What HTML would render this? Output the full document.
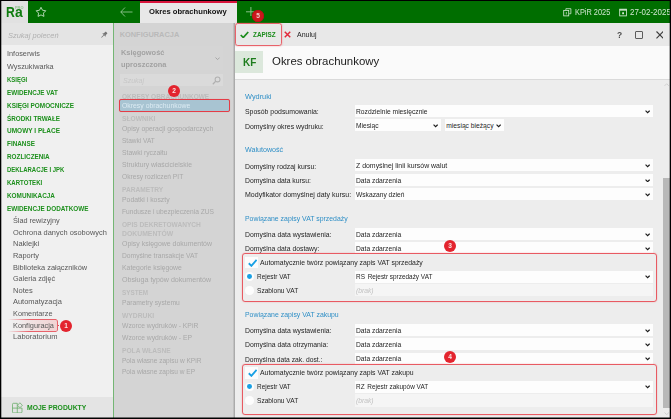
<!DOCTYPE html>
<html lang="pl">
<head>
<meta charset="utf-8">
<title>Okres obrachunkowy</title>
<style>
*{box-sizing:border-box;margin:0;padding:0}
html,body{width:671px;height:419px;overflow:hidden;background:#000}
body{font-family:"Liberation Sans",sans-serif;font-size:7.3px;color:#222;position:relative}
.abs{position:absolute}
.t{position:absolute;white-space:nowrap;line-height:10px;height:10px;transform-origin:0 50%;transform:scaleX(1.002)}
#app{position:absolute;left:1px;top:1px;width:669px;height:417px;background:#ededed}
.bk{position:absolute;background:#000;z-index:9}
#logo{left:0;top:0;width:27px;height:22px;background:#e1e1e1}
#topbar{left:27px;top:0;width:642px;height:22px;background:#006e00}
#tab{left:138.8px;top:0;width:97px;height:22px;background:#e8e8e8;border-top:2.1px solid #d8143c}
#left{left:0;top:22px;width:112.4px;height:395px;background:#f0f0f0}
#lsearch{left:0;top:22px;width:112.4px;height:22px;background:#e4e4e4}
#lfoot{left:0;top:395.8px;width:112.4px;height:22px;background:#e4e4e4}
.m1{color:#585858}
.mg{color:#1d901d;font-weight:bold;transform:scaleX(.875)}
.m2{color:#585858}
#mid{left:112.4px;top:22px;width:119.6px;height:395px;background:#d4d4d4;border-left:1px solid #74b674}
#midsh{left:231.9px;top:22px;width:2.4px;height:395px;background:linear-gradient(90deg,#cbcbcb,#a0a0a0)}
.ch{color:#bcbcbc;font-weight:bold;transform:scaleX(.9)}
.ci{color:#a8a8a8;font-size:6.7px}
#tool{left:234.3px;top:22px;width:434.5px;height:22.5px;background:#e8e8e8}
#head{left:234.3px;top:44.5px;width:434.5px;height:34.2px;background:#fafafa;border-bottom:1px solid #dadada}
.sec{color:#2f8fc6;font-size:7px}
.lab{color:#1e1e1e;font-size:6.9px}
.sel{position:absolute;height:11.6px;background:#fdfdfd}
.sel span{position:absolute;left:1.3px;top:.7px;line-height:11.9px;font-size:6.7px;color:#1e1e1e;white-space:nowrap;transform:scaleX(1.002);transform-origin:0 50%}
.sel svg{position:absolute;right:2.8px;top:4.7px;width:5.2px;height:3.8px}
.rbox{position:absolute;border:1.4px solid #e85a62;border-radius:3px;box-shadow:0 0 1.2px rgba(235,80,85,.6)}
.badge{position:absolute;transform:scaleX(1.002);width:12px;height:12px;border-radius:50%;background:#e3242e;color:#fae4e4;font-size:6.6px;font-weight:bold;text-align:center;line-height:12.2px}
</style>
</head>
<body>
<div id="app">
<div id="logo" class="abs"></div>
<div id="topbar" class="abs"></div>
<div id="tab" class="abs"></div>
<div class="t " style="left:5.3px;top:6.7px;font-size:13.8px;font-weight:bold;color:#0e7c0e;transform:scaleX(.88)">R</div>
<div class="t " style="left:13.6px;top:6.7px;font-size:13.8px;font-weight:bold;color:#0e7c0e;transform:scaleX(1.01)">a</div>
<div class="t " style="left:14.4px;top:1.9px;font-size:3.9px;color:#8fc48f;font-weight:bold">PRO</div>
<svg class="abs" style="left:34.1px;top:4.9px;width:12px;height:12px" viewBox="0 0 22 22"><path d="M11.00 2.40L13.76 7.80L19.75 8.76L15.47 13.05L16.41 19.04L11.00 16.30L5.59 19.04L6.53 13.05L2.25 8.76L8.24 7.80z" fill="none" stroke="#d8ebd8" stroke-width="1.5" stroke-linejoin="round"/></svg>
<svg class="abs" style="left:119.4px;top:5.6px;width:13px;height:10px" viewBox="0 0 26 20"><path d="M10 1L1.500 10l8.500 9M1.500 10H25" fill="none" stroke="#a9d3a9" stroke-width="1.500"/></svg>
<div class="t " style="left:148.4px;top:6.4px;font-size:7.63px;font-weight:bold;color:#111">Okres obrachunkowy</div>
<svg class="abs" style="left:245.4px;top:5.8px;width:9.600px;height:9.600px" viewBox="0 0 20 20"><path d="M10.200 0v20M0 10h20" fill="none" stroke="#96c896" stroke-width="1.900"/></svg>
<div class="t " style="left:573.6px;top:6.8px;font-size:8.2px;color:#d0e6d0;transform:scaleX(.9)">KPiR 2025</div>
<div class="t " style="left:628.6px;top:6.8px;font-size:8.2px;color:#d0e6d0;transform:scaleX(.975)">27-02-2025</div>
<svg class="abs" style="left:562.0px;top:7.4px;width:8.600px;height:8.600px" viewBox="0 0 18 18"><path d="M6 4V1.500h10.500V12H13" fill="none" stroke="#d5ead5" stroke-width="1.7"/><rect x="1.500" y="5" width="10.500" height="11.500" fill="none" stroke="#d5ead5" stroke-width="1.700"/><path d="M7 8.500v5" stroke="#d5ead5" stroke-width="1.5"/></svg>
<svg class="abs" style="left:617.9px;top:7.4px;width:8.200px;height:8.600px" viewBox="0 0 18 18" preserveAspectRatio="none"><rect x="1.500" y="2.500" width="15" height="14" fill="none" stroke="#d5ead5" stroke-width="1.800"/><path d="M1.500 4h15" stroke="#d5ead5" stroke-width="3"/><rect x="7" y="9" width="4" height="4" fill="#d5ead5"/></svg>
<div id="left" class="abs"></div><div id="lsearch" class="abs"></div><div id="lfoot" class="abs"></div>
<div class="t " style="left:7.1px;top:29.7px;font-style:italic;color:#b0b0b0;font-size:7.46px">Szukaj poleceń</div>
<svg class="abs" style="left:98.7px;top:30.0px;width:8px;height:8px" viewBox="0 0 14 14"><g transform="rotate(45 7 7)" fill="#757575"><rect x="4.700" y=".6" width="4.600" height="5.200" rx=".9"/><rect x="3.300" y="5.600" width="7.400" height="1.500" rx=".3"/><rect x="6.400" y="7" width="1.200" height="6.400"/></g></svg>
<div class="t m1" style="left:6.1px;top:48.0px;">Infoserwis</div>
<div class="t m1" style="left:6.1px;top:60.9px;">Wyszukiwarka</div>
<div class="t mg" style="left:6.1px;top:73.8px;transform:scaleX(0.817)">KSIĘGI</div>
<div class="t mg" style="left:6.1px;top:86.7px;transform:scaleX(0.864)">EWIDENCJE VAT</div>
<div class="t mg" style="left:6.1px;top:99.6px;transform:scaleX(0.879)">KSIĘGI POMOCNICZE</div>
<div class="t mg" style="left:6.1px;top:112.5px;transform:scaleX(0.868)">ŚRODKI TRWAŁE</div>
<div class="t mg" style="left:6.1px;top:125.4px;transform:scaleX(0.891)">UMOWY I PŁACE</div>
<div class="t mg" style="left:6.1px;top:138.3px;transform:scaleX(0.871)">FINANSE</div>
<div class="t mg" style="left:6.1px;top:151.2px;transform:scaleX(0.870)">ROZLICZENIA</div>
<div class="t mg" style="left:6.1px;top:164.1px;transform:scaleX(0.817)">DEKLARACJE I JPK</div>
<div class="t mg" style="left:6.1px;top:177.0px;transform:scaleX(0.829)">KARTOTEKI</div>
<div class="t mg" style="left:6.1px;top:189.9px;transform:scaleX(0.877)">KOMUNIKACJA</div>
<div class="t mg" style="left:6.1px;top:202.8px;transform:scaleX(0.872)">EWIDENCJE DODATKOWE</div>
<div class="t m2" style="left:12.1px;top:215.1px;transform:scaleX(0.999)">Ślad rewizyjny</div>
<div class="t m2" style="left:12.1px;top:226.7px;transform:scaleX(1.019)">Ochrona danych osobowych</div>
<div class="t m2" style="left:12.1px;top:238.3px;transform:scaleX(1.026)">Naklejki</div>
<div class="t m2" style="left:12.1px;top:249.9px;transform:scaleX(1.017)">Raporty</div>
<div class="t m2" style="left:12.1px;top:261.5px;transform:scaleX(1.016)">Biblioteka załączników</div>
<div class="t m2" style="left:12.1px;top:273.1px;transform:scaleX(0.988)">Galeria zdjęć</div>
<div class="t m2" style="left:12.1px;top:284.7px;transform:scaleX(1.033)">Notes</div>
<div class="t m2" style="left:12.1px;top:296.3px;transform:scaleX(1.022)">Automatyzacja</div>
<div class="t m2" style="left:12.1px;top:307.9px;transform:scaleX(1.004)">Komentarze</div>
<div class="abs" style="left:7.0px;top:318.0px;width:50.2px;height:12.9px;border:1.3px solid #e8626a;border-left:none;border-radius:0 2.5px 2.5px 0;background:linear-gradient(90deg,rgba(240,240,240,0),rgba(242,200,200,.75));-webkit-mask-image:linear-gradient(90deg,transparent,#000 42%);mask-image:linear-gradient(90deg,transparent,#000 42%)"></div><div class="abs" style="left:57.0px;top:323.9px;width:1.4px;height:1.2px;background:#e2464e"></div>
<div class="t m2" style="left:12.1px;top:319.5px;transform:scaleX(1.010)">Konfiguracja</div>
<div class="t m2" style="left:12.1px;top:331.1px;transform:scaleX(1.033)">Laboratorium</div>
<div class="badge" style="left:58.5px;top:318.8px">1</div>
<svg class="abs" style="left:11.0px;top:400.8px;width:11.400px;height:11.400px" viewBox="0 0 22.800 22.800"><g fill="none" stroke="#62aa62" stroke-width="1.500"><path d="M10.600 2.600H3a2 2 0 0 0-2 2V19.800a2 2 0 0 0 2 2H18a2 2 0 0 0 2-2V12"/><path d="M10.600 2.600V21.800M1 12.200H20"/><path d="M15.900 1.600l4.900 4.900-4.900 4.900L11 6.500z" fill="#e4e4e4"/></g></svg>
<div class="t mg" style="left:26.1px;top:401.7px;font-size:7.4px;transform:scaleX(.92)">MOJE PRODUKTY</div>
<div id="mid" class="abs"></div><div id="midsh" class="abs"></div>
<div class="t ch" style="left:118.7px;top:29.3px;font-size:7.4px;color:#b9b9b9;transform:scaleX(1)">KONFIGURACJA</div>
<div class="abs" style="left:118.0px;top:44.8px;width:104px;height:24.2px;background:#d5d5d5"></div>
<div class="t " style="left:120.0px;top:47.4px;font-size:8px;font-weight:bold;color:#a2a2a2;transform:scaleX(.93)">Księgowość</div>
<div class="t " style="left:120.0px;top:58.7px;font-size:8px;font-weight:bold;color:#a2a2a2;transform:scaleX(.93)">uproszczona</div>
<svg class="abs" style="left:213.9px;top:55.9px;width:5.2px;height:3.7px" viewBox="0 0 10 7"><path d="M1 1l4 4 4-4" fill="none" stroke="#a4a4a4" stroke-width="1.900"/></svg>
<div class="abs" style="left:118.5px;top:72.7px;width:103.5px;height:12px;background:#dadada"></div>
<div class="t " style="left:122.0px;top:74.5px;font-style:italic;color:#c6c6c6;font-size:7px">Szukaj</div>
<svg class="abs" style="left:211.4px;top:74.6px;width:9px;height:9px" viewBox="0 0 17 17"><circle cx="10.500" cy="6.500" r="4.600" fill="none" stroke="#b0b0b0" stroke-width="1.900"/><path d="M7 10L1.500 15.500" stroke="#b0b0b0" stroke-width="2.300"/></svg>
<div class="t ch" style="left:121.0px;top:90.9px;;transform:scaleX(0.890)">OKRESY OBRACHUNKOWE</div>
<div class="abs" style="left:117.75px;top:98.0px;width:111.25px;height:12.75px;background:#a8c4d2;border:1.25px solid #e43c46;border-radius:2px;box-shadow:0 0 .8px rgba(230,70,80,.5)"></div>
<div class="t ci" style="left:121.0px;top:100.3px;color:#dcebf3;transform:scaleX(1.026)">Okresy obrachunkowe</div>
<div class="t ch" style="left:121.0px;top:113.4px;;transform:scaleX(0.915)">SŁOWNIKI</div>
<div class="t ci" style="left:121.0px;top:123.4px;;transform:scaleX(1.024)">Opisy operacji gospodarczych</div>
<div class="t ci" style="left:121.0px;top:135.1px;;transform:scaleX(0.977)">Stawki VAT</div>
<div class="t ci" style="left:121.0px;top:147.1px;;transform:scaleX(1.018)">Stawki ryczałtu</div>
<div class="t ci" style="left:121.0px;top:159.3px;;transform:scaleX(1.017)">Struktury właścicielskie</div>
<div class="t ci" style="left:121.0px;top:171.3px;;transform:scaleX(0.992)">Okresy rozliczeń PIT</div>
<div class="t ch" style="left:121.0px;top:184.1px;;transform:scaleX(0.907)">PARAMETRY</div>
<div class="t ci" style="left:121.0px;top:194.4px;;transform:scaleX(1.024)">Podatki i koszty</div>
<div class="t ci" style="left:121.0px;top:206.2px;;transform:scaleX(0.994)">Fundusze i ubezpieczenia ZUS</div>
<div class="t ch" style="left:121.0px;top:219.2px;;transform:scaleX(0.901)">OPIS DEKRETOWANYCH</div>
<div class="t ch" style="left:121.0px;top:228.1px;;transform:scaleX(0.937)">DOKUMENTÓW</div>
<div class="t ci" style="left:121.0px;top:238.4px;;transform:scaleX(1.039)">Opisy księgowe dokumentów</div>
<div class="t ci" style="left:121.0px;top:250.0px;;transform:scaleX(1.001)">Domyślne transakcje VAT</div>
<div class="t ci" style="left:121.0px;top:262.1px;;transform:scaleX(1.026)">Kategorie księgowe</div>
<div class="t ci" style="left:121.0px;top:274.1px;;transform:scaleX(1.061)">Obsługa typów dokumentów</div>
<div class="t ch" style="left:121.0px;top:287.1px;;transform:scaleX(0.870)">SYSTEM</div>
<div class="t ci" style="left:121.0px;top:297.1px;;transform:scaleX(1.002)">Parametry systemu</div>
<div class="t ch" style="left:121.0px;top:309.7px;;transform:scaleX(0.923)">WYDRUKI</div>
<div class="t ci" style="left:121.0px;top:319.9px;;transform:scaleX(1.011)">Wzorce wydruków - KPiR</div>
<div class="t ci" style="left:121.0px;top:331.9px;;transform:scaleX(1.013)">Wzorce wydruków - EP</div>
<div class="t ch" style="left:121.0px;top:344.8px;;transform:scaleX(0.909)">POLA WŁASNE</div>
<div class="t ci" style="left:121.0px;top:354.5px;;transform:scaleX(0.980)">Pola własne zapisu w KPiR</div>
<div class="t ci" style="left:121.0px;top:366.4px;;transform:scaleX(0.978)">Pola własne zapisu w EP</div>
<div class="badge" style="left:166.85px;top:84.1px">2</div>
<div id="tool" class="abs"></div><div id="head" class="abs"></div>
<div class="rbox" style="left:233.8px;top:22.4px;width:47.5px;height:22.500px;border-radius:2.800px;border-width:1.400px;border-color:#e8626a;box-shadow:0 0 1.500px rgba(235,90,95,.7)"></div>
<svg class="abs" style="left:238.7px;top:29.5px;width:9px;height:7.500px" viewBox="0 0 18 15"><path d="M1.500 8l5 5L16.500 2" fill="none" stroke="#1c8c1c" stroke-width="3.500"/></svg>
<div class="t " style="left:252.0px;top:29.4px;font-size:7.2px;font-weight:bold;color:#1c8c1c;transform:scaleX(.885)">ZAPISZ</div>
<svg class="abs" style="left:283.4px;top:30.0px;width:7px;height:7px" viewBox="0 0 14 14"><path d="M1.500 1.500l11 11M12.500 1.500l-11 11" fill="none" stroke="#e2283a" stroke-width="2.900"/></svg>
<div class="t " style="left:295.7px;top:29.2px;font-size:7px;color:#222">Anuluj</div>
<div class="t " style="left:615.7px;top:29.0px;font-size:9.4px;color:#4c4c4c;font-weight:bold;transform:scaleX(.9)">?</div>
<div class="abs" style="left:633.8px;top:30.0px;width:7.900px;height:7.800px;border:1.35px solid #5c5c5c;border-radius:1px"></div>
<svg class="abs" style="left:654.6px;top:30.0px;width:7.800px;height:7.800px" viewBox="0 0 16 16"><path d="M1 1l14 14M15 1L1 15" fill="none" stroke="#3c3c3c" stroke-width="2.300"/></svg>
<div class="abs" style="left:234.4px;top:50.0px;width:27.600px;height:22px;background:#dce8dc"></div>
<div class="t " style="left:242.3px;top:55.7px;font-size:11.6px;font-weight:bold;color:#1c7c1c;transform:scaleX(.86)">KF</div>
<div class="t " style="left:270.6px;top:55.1px;font-size:11.4px;color:#1a1a1a">Okres obrachunkowy</div>
<div class="abs" style="left:662.0px;top:177.2px;width:6.7px;height:229.5px;background:#b8b8b8"></div>
<svg class="abs" style="left:662.6px;top:82.2px;width:5.400px;height:3.400px" viewBox="0 0 11 7"><path d="M1 6l4.500-4.500L10 6" fill="none" stroke="#c4c4c4" stroke-width="1.400"/></svg>
<svg class="abs" style="left:662.5px;top:410.6px;width:5.400px;height:3.400px" viewBox="0 0 11 7"><path d="M1 1l4.500 4.500L10 1" fill="none" stroke="#c4c4c4" stroke-width="1.400"/></svg>
<div class="t sec" style="left:243.7px;top:90.5px;;transform:scaleX(1.051)">Wydruki</div>
<div class="t lab" style="left:243.7px;top:106.1px;;transform:scaleX(1.003)">Sposób podsumowania:</div>
<div class="sel" style="left:354.0px;top:104.4px;width:298.0px;height:11.9px;background:#fdfdfd;"><span style=";transform:scaleX(1.003);transform-origin:0 50%">Rozdzielnie miesięcznie</span><svg viewBox="0 0 11 8"><path d="M1.200 1.500l4.300 4.300 4.300-4.300" fill="none" stroke="#1c1c1c" stroke-width="2.400"/></svg></div>
<div class="t lab" style="left:243.7px;top:120.5px;;transform:scaleX(1.003)">Domyślny okres wydruku:</div>
<div class="sel" style="left:354.0px;top:118.3px;width:86.0px;height:11.9px;background:#fdfdfd;"><span style=";transform:scaleX(0.997);transform-origin:0 50%">Miesiąc</span><svg viewBox="0 0 11 8"><path d="M1.200 1.500l4.300 4.300 4.300-4.300" fill="none" stroke="#1c1c1c" stroke-width="2.400"/></svg></div>
<div class="sel" style="left:444.0px;top:118.3px;width:59.0px;height:11.9px;background:#fdfdfd;"><span style=";transform:scaleX(1.000);transform-origin:0 50%">miesiąc bieżący</span><svg viewBox="0 0 11 8"><path d="M1.200 1.500l4.300 4.300 4.300-4.300" fill="none" stroke="#1c1c1c" stroke-width="2.400"/></svg></div>
<div class="t sec" style="left:243.7px;top:144.2px;;transform:scaleX(1.019)">Walutowość</div>
<div class="t lab" style="left:243.7px;top:160.5px;;transform:scaleX(0.993)">Domyślny rodzaj kursu:</div>
<div class="sel" style="left:354.0px;top:158.4px;width:298.0px;height:11.9px;background:#fdfdfd;"><span style=";transform:scaleX(1.036);transform-origin:0 50%">Z domyślnej linii kursów walut</span><svg viewBox="0 0 11 8"><path d="M1.200 1.500l4.300 4.300 4.300-4.300" fill="none" stroke="#1c1c1c" stroke-width="2.400"/></svg></div>
<div class="t lab" style="left:243.7px;top:174.7px;;transform:scaleX(0.989)">Domyślna data kursu:</div>
<div class="sel" style="left:354.0px;top:172.9px;width:298.0px;height:11.9px;background:#fdfdfd;"><span style=";transform:scaleX(1.003);transform-origin:0 50%">Data zdarzenia</span><svg viewBox="0 0 11 8"><path d="M1.200 1.500l4.300 4.300 4.300-4.300" fill="none" stroke="#1c1c1c" stroke-width="2.400"/></svg></div>
<div class="t lab" style="left:243.7px;top:189.1px;;transform:scaleX(1.019)">Modyfikator domyślnej daty kursu:</div>
<div class="sel" style="left:354.0px;top:187.3px;width:298.0px;height:11.9px;background:#fdfdfd;"><span style=";transform:scaleX(0.996);transform-origin:0 50%">Wskazany dzień</span><svg viewBox="0 0 11 8"><path d="M1.200 1.500l4.300 4.300 4.300-4.300" fill="none" stroke="#1c1c1c" stroke-width="2.400"/></svg></div>
<div class="t sec" style="left:243.7px;top:212.9px;;transform:scaleX(0.984)">Powiązane zapisy VAT sprzedaży</div>
<div class="t lab" style="left:243.7px;top:229.1px;;transform:scaleX(0.995)">Domyślna data wystawienia:</div>
<div class="sel" style="left:354.0px;top:227.1px;width:298.0px;height:11.9px;background:#fdfdfd;"><span style=";transform:scaleX(1.003);transform-origin:0 50%">Data zdarzenia</span><svg viewBox="0 0 11 8"><path d="M1.200 1.500l4.300 4.300 4.300-4.300" fill="none" stroke="#1c1c1c" stroke-width="2.400"/></svg></div>
<div class="t lab" style="left:243.7px;top:243.0px;;transform:scaleX(0.990)">Domyślna data dostawy:</div>
<div class="sel" style="left:354.0px;top:241.3px;width:298.0px;height:11.9px;background:#fdfdfd;"><span style=";transform:scaleX(1.003);transform-origin:0 50%">Data zdarzenia</span><svg viewBox="0 0 11 8"><path d="M1.200 1.500l4.300 4.300 4.300-4.300" fill="none" stroke="#1c1c1c" stroke-width="2.400"/></svg></div>
<div class="abs" style="left:241.5px;top:253.0px;width:414px;height:47.1px;background:#ededed"></div>
<div class="abs" style="left:244.0px;top:255.6px;width:12.600px;height:11.900px;background:#fcfcfc"></div>
<svg class="abs" style="left:246.6px;top:257.8px;width:9.400px;height:7.800px" viewBox="0 0 18 15"><path d="M1.500 8.200l5 5L16.500 1.800" fill="none" stroke="#18a0e4" stroke-width="3.500"/></svg>
<div class="t lab" style="left:259.4px;top:257.1px;font-size:6.85px">Automatycznie twórz powiązany zapis VAT sprzedaży</div>
<div class="abs" style="left:244.29999999999998px;top:271.2px;width:8.600px;height:8.600px;border-radius:50%;background:#fdfdfd"></div>
<div class="abs" style="left:246.2px;top:273.1px;width:4.800px;height:4.800px;border-radius:50%;background:#18a0e4"></div>
<div class="t lab" style="left:255.7px;top:271.0px;transform:scaleX(.935)">Rejestr VAT</div>
<div class="sel" style="left:354.0px;top:269.5px;width:298.0px;height:12px;background:#fdfdfd;"><span style="transform:scaleX(.96);transform-origin:0 50%;top:.7px">RS<i style="display:inline-block;width:2.900px"></i>Rejestr sprzedaży VAT</span><svg viewBox="0 0 11 8"><path d="M1.200 1.500l4.300 4.300 4.300-4.300" fill="none" stroke="#1c1c1c" stroke-width="2.400"/></svg></div>
<div class="abs" style="left:244.29999999999998px;top:285.1px;width:8.600px;height:8.600px;border-radius:50%;background:#fdfdfd"></div>
<div class="t lab" style="left:255.7px;top:284.9px;transform:scaleX(.957)">Szablonu VAT</div>
<div class="sel" style="left:354.0px;top:283.2px;width:298.0px;height:12.3px;background:#f5f5f5;"><span style="color:#c2c2c2;font-style:italic;top:.6px">(brak)</span></div>
<div class="rbox" style="left:240.6px;top:252.2px;width:415.600px;height:48.5px"></div>
<div class="t sec" style="left:243.7px;top:308.8px;;transform:scaleX(0.987)">Powiązane zapisy VAT zakupu</div>
<div class="t lab" style="left:243.7px;top:325.1px;;transform:scaleX(0.995)">Domyślna data wystawienia:</div>
<div class="sel" style="left:354.0px;top:323.2px;width:298.0px;height:11.9px;background:#fdfdfd;"><span style=";transform:scaleX(1.003);transform-origin:0 50%">Data zdarzenia</span><svg viewBox="0 0 11 8"><path d="M1.200 1.500l4.300 4.300 4.300-4.300" fill="none" stroke="#1c1c1c" stroke-width="2.400"/></svg></div>
<div class="t lab" style="left:243.7px;top:339.3px;;transform:scaleX(0.996)">Domyślna data otrzymania:</div>
<div class="sel" style="left:354.0px;top:337.4px;width:298.0px;height:11.9px;background:#fdfdfd;"><span style=";transform:scaleX(1.003);transform-origin:0 50%">Data zdarzenia</span><svg viewBox="0 0 11 8"><path d="M1.200 1.500l4.300 4.300 4.300-4.300" fill="none" stroke="#1c1c1c" stroke-width="2.400"/></svg></div>
<div class="t lab" style="left:243.7px;top:353.5px;;transform:scaleX(0.976)">Domyślna data zak. dost.:</div>
<div class="sel" style="left:354.0px;top:351.8px;width:298.0px;height:11.9px;background:#fdfdfd;"><span style=";transform:scaleX(1.003);transform-origin:0 50%">Data zdarzenia</span><svg viewBox="0 0 11 8"><path d="M1.200 1.500l4.300 4.300 4.300-4.300" fill="none" stroke="#1c1c1c" stroke-width="2.400"/></svg></div>
<div class="abs" style="left:241.5px;top:363.90000000000003px;width:414px;height:49.8px;background:#ededed"></div>
<div class="abs" style="left:244.0px;top:365.7px;width:12.600px;height:11.900px;background:#fcfcfc"></div>
<svg class="abs" style="left:246.6px;top:367.9px;width:9.400px;height:7.800px" viewBox="0 0 18 15"><path d="M1.500 8.200l5 5L16.500 1.800" fill="none" stroke="#18a0e4" stroke-width="3.500"/></svg>
<div class="t lab" style="left:259.4px;top:367.2px;font-size:6.85px">Automatycznie twórz powiązany zapis VAT zakupu</div>
<div class="abs" style="left:244.29999999999998px;top:381.5px;width:8.600px;height:8.600px;border-radius:50%;background:#fdfdfd"></div>
<div class="abs" style="left:246.2px;top:383.4px;width:4.800px;height:4.800px;border-radius:50%;background:#18a0e4"></div>
<div class="t lab" style="left:255.7px;top:381.3px;transform:scaleX(.935)">Rejestr VAT</div>
<div class="sel" style="left:354.0px;top:379.8px;width:298.0px;height:12px;background:#fdfdfd;"><span style="transform:scaleX(.96);transform-origin:0 50%;top:.7px">RZ<i style="display:inline-block;width:2.900px"></i>Rejestr zakupów VAT</span><svg viewBox="0 0 11 8"><path d="M1.200 1.500l4.300 4.300 4.300-4.300" fill="none" stroke="#1c1c1c" stroke-width="2.400"/></svg></div>
<div class="abs" style="left:244.29999999999998px;top:395.2px;width:8.600px;height:8.600px;border-radius:50%;background:#fdfdfd"></div>
<div class="t lab" style="left:255.7px;top:395.0px;transform:scaleX(.957)">Szablonu VAT</div>
<div class="sel" style="left:354.0px;top:393.3px;width:298.0px;height:12.3px;background:#f5f5f5;"><span style="color:#c2c2c2;font-style:italic;top:.6px">(brak)</span></div>
<div class="rbox" style="left:240.6px;top:363.1px;width:415.600px;height:51.2px"></div>
<div class="badge" style="left:251.0px;top:8.6px;background:#cc171c;box-shadow:inset 0 0 0 .7px #b41217;color:#f2cccc">5</div>
<div class="badge" style="left:442.9px;top:239.2px">3</div>
<div class="badge" style="left:442.8px;top:349.6px">4</div>
<svg class="abs" style="left:-1px;top:-1px;width:671px;height:419px;z-index:9" viewBox="0 0 671 419"><path fill="#000" fill-rule="evenodd" d="M0 0H671V419H0zM1.300 1.050V417.500H669.700V1.050z"/></svg>
</div>
</body>
</html>
